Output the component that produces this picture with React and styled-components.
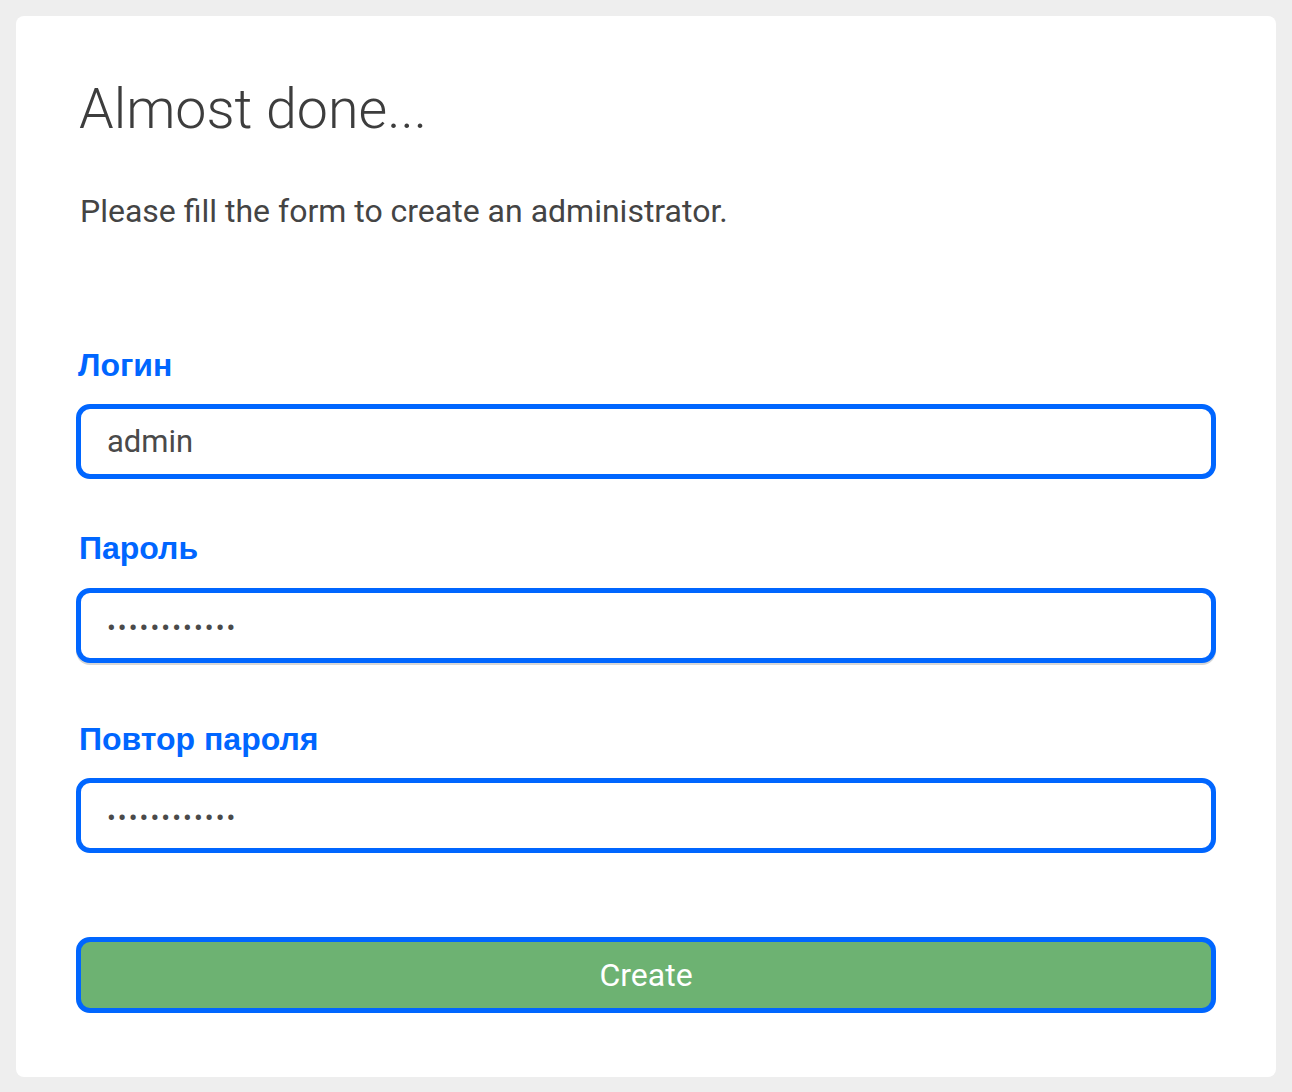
import React from "react";
import styled, { createGlobalStyle } from "styled-components";

const Global = createGlobalStyle`
  html, body { margin: 0; padding: 0; background: #eeeeee; }
  body { font-family: Roboto, "Liberation Sans", sans-serif; }
  * { box-sizing: border-box; }
`;

const Page = styled.div`
  padding: 16px 16px 15px 16px;
`;

const Card = styled.div`
  background: #ffffff;
  border-radius: 8px;
  padding: 61px 60px 64px 60px;
  display: flex;
  flex-direction: column;
`;

const Title = styled.h1`
  margin: 0 0 0 3px;
  font-family: Roboto, sans-serif;
  font-weight: 300;
  font-size: 55.5px;
  line-height: 66px;
  color: #3d3d3d;
`;

const Lead = styled.p`
  margin: 52px 0 0 4px;
  font-family: Roboto, sans-serif;
  font-weight: 400;
  font-size: 32px;
  line-height: 33px;
  color: #444444;
`;

const Form = styled.form`
  display: flex;
  flex-direction: column;
  margin-top: 120px;
`;

const Field = styled.div`
  display: flex;
  flex-direction: column;
  margin-top: ${(p) => p.$gap || 0}px;
`;

const Label = styled.label`
  font-family: "Liberation Sans", Arial, sans-serif;
  font-weight: 700;
  font-size: 32px;
  line-height: 34px;
  color: #0066ff;
  margin: 0 0 ${(p) => p.$below ?? 22}px ${(p) => p.$indent || 2}px;
`;

const Input = styled.input`
  width: 100%;
  height: 75px;
  border: 5px solid #0066ff;
  border-radius: 14px;
  padding: ${(p) => (p.type === "password" ? "4px 26px 0" : "0 26px")};
  font-family: Roboto, sans-serif;
  font-size: ${(p) => (p.type === "password" ? 26 : 31)}px;
  color: #4a4a4a;
  background: #ffffff;
  outline: none;
  box-shadow: ${(p) => (p.$shadow ? "0 2px 0 #d6d6d6" : "none")};
  letter-spacing: ${(p) => (p.type === "password" ? "2.1px" : "0")};
`;

const Button = styled.button`
  margin-top: 84px;
  width: 100%;
  height: 76px;
  border: 5px solid #0066ff;
  border-radius: 14px;
  background: #6db272;
  color: #ffffff;
  font-family: Roboto, sans-serif;
  font-size: 32px;
  font-weight: 400;
  cursor: pointer;
`;

export default function App() {
  return (
    <>
      <Global />
      <Page>
        <Card>
          <Title>Almost done...</Title>
          <Lead>Please fill the form to create an administrator.</Lead>
          <Form onSubmit={(e) => e.preventDefault()}>
            <Field>
              <Label>Логин</Label>
              <Input type="text" defaultValue="admin" />
            </Field>
            <Field $gap={52}>
              <Label $below={23} $indent={3}>Пароль</Label>
              <Input type="password" defaultValue="adminpasswrd" $shadow />
            </Field>
            <Field $gap={59}>
              <Label $indent={3}>Повтор пароля</Label>
              <Input type="password" defaultValue="adminpasswrd" />
            </Field>
            <Button type="submit">Create</Button>
          </Form>
        </Card>
      </Page>
    </>
  );
}
